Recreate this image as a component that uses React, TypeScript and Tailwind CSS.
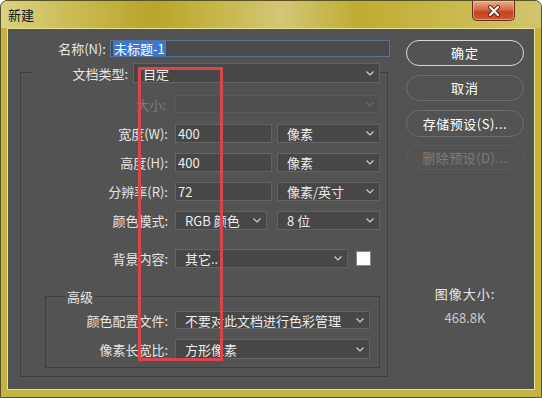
import React from "react";

const Chevron = ({ color = "#cfcfcf" }: { color?: string }) => (
  <svg width="8" height="5" viewBox="0 0 8 5" className="shrink-0">
    <path d="M0.5 0.5 L4 4 L7.5 0.5" fill="none" stroke={color} strokeWidth="1.2" />
  </svg>
);

const Select = ({
  text,
  w,
  h = 19,
  disabled = false,
}: {
  text?: string;
  w: string;
  h?: number;
  disabled?: boolean;
}) => (
  <div
    className={`${w} flex items-center justify-between pl-[9px] pr-[5px] border ${
      disabled ? "border-[#5a5a5a] bg-[#4f4f4f]" : "border-[#636363] bg-[#474747]"
    } ${h === 18 ? "h-[18px]" : h === 20 ? "h-[20px]" : "h-[19px]"}`}
  >
    <span className="text-[13px] leading-none text-[#ececec] whitespace-nowrap">{text}</span>
    <Chevron color={disabled ? "#6a6a6a" : "#cfcfcf"} />
  </div>
);

const Input = ({ text, w }: { text: string; w: string }) => (
  <div className={`${w} h-[19px] flex items-center pl-[2px] border border-[#636363] bg-[#474747]`}>
    <span className="text-[13px] leading-none text-[#ececec]">{text}</span>
  </div>
);

const Label = ({ children, w, dim = false }: { children: React.ReactNode; w: string; dim?: boolean }) => (
  <div className={`${w} text-right text-[13px] leading-none whitespace-nowrap ${dim ? "text-[#7c7c7c]" : "text-[#e6e6e6]"}`}>
    {children}
  </div>
);

export default function App() {
  return (
    <div className="w-[542px] h-[398px] relative overflow-hidden rounded-t-[7px] border border-[#5b5222] bg-[#c5b442] font-['Noto_Sans_CJK_SC','Noto_Sans',sans-serif]">
      {/* title bar */}
      <div className="h-[27px] flex items-center pl-[7px] bg-[linear-gradient(90deg,#dbd186_0%,#cdbd58_12%,#b8a52d_28%,#c7b64a_40%,#d3c676_52%,#bfac34_66%,#c8b74a_82%,#d2c46e_100%)]">
        <span className="text-[13px] leading-none text-[#111]">新建</span>
      </div>
      {/* close button */}
      <div className="absolute top-0 left-[471px] w-[43px] h-[20px] rounded-b-[5px] border border-t-0 border-[#6d2b19] bg-[linear-gradient(180deg,#e9ad8f_0%,#d9704e_40%,#c4401f_60%,#cf5a32_100%)] flex items-center justify-center shadow-[inset_0_0_0_1px_rgba(255,210,180,0.5)]">
        <svg width="14" height="12" viewBox="0 0 14 12">
          <path d="M3 2 L11 10 M11 2 L3 10" stroke="#5a2414" strokeWidth="4" strokeLinecap="round" />
          <path d="M3 2 L11 10 M11 2 L3 10" stroke="#ffffff" strokeWidth="2.2" strokeLinecap="round" />
        </svg>
      </div>

      {/* content */}
      <div className="ml-[6px] w-[528px] border border-[#ece28f]">
        <div className="h-[360px] bg-[#535353] flex">
          {/* left column */}
          <div className="w-[382px] flex flex-col">
            <div className="mt-[11px] flex items-center">
              <Label w="w-[98px]">名称(N):</Label>
              <div className="ml-[4px] w-[280px] h-[17px] flex items-center pl-[2px] border border-[#56749a] bg-[#4a4a4a]">
                <span className="text-[13px] leading-[15px] px-[1px] bg-[#3a78d4] text-white">未标题-1</span>
              </div>
            </div>

            {/* group box */}
            <div className="mt-[15px] ml-[12px] w-[368px] border border-[#3f3f3f] flex flex-col">
              <div className="-mt-[10px] flex items-center pl-[11px]">
                <div className="w-[101px] h-[20px] bg-[#535353] flex items-center justify-end pr-[5px]">
                  <span className="text-[13px] leading-none text-[#e6e6e6]">文档类型:</span>
                </div>
                <Select text="自定" w="w-[247px]" h={20} />
              </div>

              <div className="mt-[12px] flex items-center">
                <Label w="w-[145px]" dim>大小:</Label>
                <div className="ml-[9px]">
                  <Select w="w-[205px]" h={18} disabled />
                </div>
              </div>

              <div className="mt-[11px] flex items-center">
                <Label w="w-[147px]">宽度(W):</Label>
                <div className="ml-[7px] flex gap-[5px]">
                  <Input text="400" w="w-[97px]" />
                  <Select text="像素" w="w-[103px]" />
                </div>
              </div>

              <div className="mt-[10px] flex items-center">
                <Label w="w-[147px]">高度(H):</Label>
                <div className="ml-[7px] flex gap-[5px]">
                  <Input text="400" w="w-[97px]" />
                  <Select text="像素" w="w-[103px]" />
                </div>
              </div>

              <div className="mt-[10px] flex items-center">
                <Label w="w-[147px]">分辨率(R):</Label>
                <div className="ml-[7px] flex gap-[5px]">
                  <Input text="72" w="w-[97px]" />
                  <Select text="像素/英寸" w="w-[103px]" />
                </div>
              </div>

              <div className="mt-[10px] flex items-center">
                <Label w="w-[147px]">颜色模式:</Label>
                <div className="ml-[7px] flex gap-[10px]">
                  <Select text="RGB 颜色" w="w-[92px]" />
                  <Select text="8 位" w="w-[103px]" />
                </div>
              </div>

              <div className="mt-[19px] flex items-center">
                <Label w="w-[147px]">背景内容:</Label>
                <div className="ml-[7px] flex items-center gap-[8px]">
                  <Select text="其它.." w="w-[173px]" />
                  <div className="w-[15px] h-[15px] bg-white border border-[#888]" />
                </div>
              </div>

              {/* advanced */}
              <div className="mt-[28px] mb-[8px] ml-[24px] w-[335px] border border-[#3f3f3f] flex flex-col pb-[8px]">
                <div className="-mt-[8px] h-[16px] flex items-center pl-[19px]">
                  <span className="bg-[#535353] px-[2px] text-[13px] leading-[16px] text-[#e6e6e6]">高级</span>
                </div>
                <div className="mt-[6px] flex items-center">
                  <Label w="w-[122px]">颜色配置文件:</Label>
                  <div className="ml-[7px]">
                    <Select text="不要对此文档进行色彩管理" w="w-[195px]" h={18} />
                  </div>
                </div>
                <div className="mt-[10px] flex items-center">
                  <Label w="w-[122px]">像素长宽比:</Label>
                  <div className="ml-[7px]">
                    <Select text="方形像素" w="w-[195px]" h={20} />
                  </div>
                </div>
              </div>
            </div>
          </div>

          {/* right column */}
          <div className="ml-[16px] w-[118px] flex flex-col pt-[11px]">
            <div className="h-[26px] rounded-full border-[1.5px] border-[#d8d8d8] flex items-center justify-center text-[13px] text-white tracking-[1px]">确定</div>
            <div className="mt-[9px] h-[26px] rounded-full border border-[#6f6f6f] flex items-center justify-center text-[13px] text-white tracking-[1px]">取消</div>
            <div className="mt-[9px] h-[27px] rounded-full border border-[#6f6f6f] flex items-center justify-center text-[13px] text-white tracking-[0.5px]">存储预设(S)...</div>
            <div className="mt-[8px] h-[25px] rounded-full border border-[#5c5c5c] flex items-center justify-center text-[13px] text-[#7b7b7b] tracking-[0.5px]">删除预设(D)...</div>
            <div className="mt-[117px] text-center text-[13px] leading-none text-[#e6e6e6] tracking-[1px]">图像大小:</div>
            <div className="mt-[11px] text-center text-[13px] leading-none text-[#c9c9c9]">468.8K</div>
          </div>
        </div>
      </div>

      {/* red annotation rectangle */}
      <div className="absolute left-[137px] top-[66px] w-[85px] h-[294px] border-[3px] border-[#d9454b] pointer-events-none" />
    </div>
  );
}
